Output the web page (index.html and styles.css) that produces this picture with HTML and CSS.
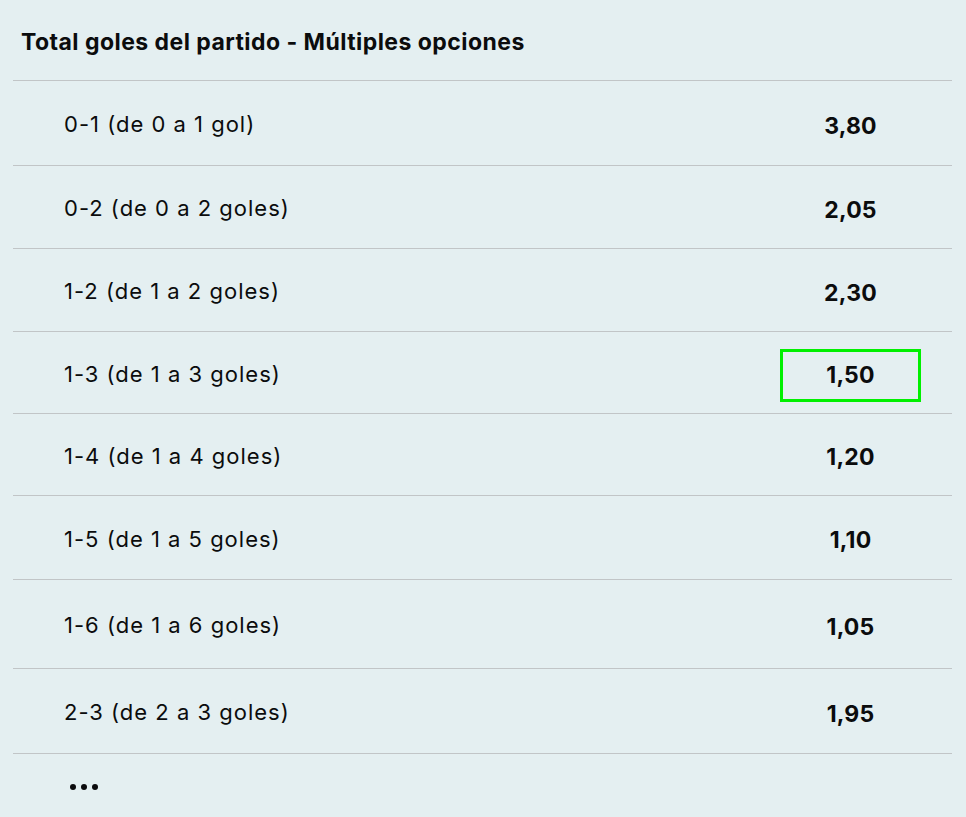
FILE: index.html
```html
<!DOCTYPE html>
<html lang="es">
<head>
<meta charset="utf-8">
<title>Total goles del partido</title>
<link rel="stylesheet" href="styles.css">
</head>
<body>
<div class="market">
  <div class="market-header">Total goles del partido - Múltiples opciones</div>
  <div class="row h85"><span class="label">0-1 (de 0 a 1 gol)</span><span class="odd">3,80</span></div>
  <div class="row h83"><span class="label">0-2 (de 0 a 2 goles)</span><span class="odd">2,05</span></div>
  <div class="row h83"><span class="label">1-2 (de 1 a 2 goles)</span><span class="odd">2,30</span></div>
  <div class="row h82"><span class="label">1-3 (de 1 a 3 goles)</span><span class="odd selected">1,50</span></div>
  <div class="row h82"><span class="label">1-4 (de 1 a 4 goles)</span><span class="odd">1,20</span></div>
  <div class="row h84"><span class="label">1-5 (de 1 a 5 goles)</span><span class="odd">1,10</span></div>
  <div class="row h89"><span class="label">1-6 (de 1 a 6 goles)</span><span class="odd">1,05</span></div>
  <div class="row h85"><span class="label">2-3 (de 2 a 3 goles)</span><span class="odd">1,95</span></div>
  <div class="more"><span class="dot"></span><span class="dot"></span><span class="dot"></span></div>
</div>
</body>
</html>
```

FILE: styles.css
```css
html, body {
  margin: 0;
  padding: 0;
  background: #e4eff1;
}
body {
  font-family: Inter, "Noto Sans", sans-serif;
  color: #0b0c0d;
}
.market {
  margin-left: 13px;
  width: 939px;
}
.market-header {
  box-sizing: border-box;
  height: 81px;
  border-bottom: 1px solid #c1c5c7;
  padding-left: 8px;
  padding-top: 5px;
  display: flex;
  align-items: center;
  font-weight: 700;
  font-size: 23px;
  letter-spacing: 0.45px;
  line-height: 1;
}
.row {
  box-sizing: border-box;
  display: flex;
  align-items: center;
  justify-content: space-between;
  border-bottom: 1px solid #c1c5c7;
  padding-left: 51px;
  padding-right: 31px;
  padding-top: 5px;
}
.h82 { height: 82px; }
.h83 { height: 83px; }
.h84 { height: 84px; }
.h85 { height: 85px; }
.h89 { height: 89px; }
.label {
  font-size: 22px;
  font-weight: 400;
  letter-spacing: 1px;
  margin-bottom: 3px;
}
.odd {
  width: 141px;
  height: 53px;
  box-sizing: border-box;
  border: 3px solid transparent;
  display: flex;
  align-items: center;
  justify-content: center;
  font-size: 23px;
  font-weight: 700;
  letter-spacing: 0.2px;
}
.odd.selected {
  border-color: #00f000;
}
.more {
  display: flex;
  gap: 5px;
  padding-left: 57px;
  padding-top: 30px;
}
.dot {
  width: 6px;
  height: 6px;
  border-radius: 50%;
  background: #0b0c0d;
}
```
